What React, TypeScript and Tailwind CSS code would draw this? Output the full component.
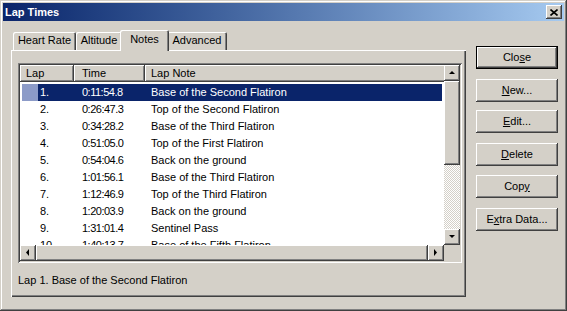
import React from 'react';

const raised =
  'shadow-[inset_-1px_-1px_#404040,inset_1px_1px_#ffffff,inset_-2px_-2px_#808080,inset_2px_2px_#d4d0c8]';
const sunken =
  'shadow-[inset_1px_1px_#808080,inset_-1px_-1px_#ffffff,inset_2px_2px_#404040,inset_-2px_-2px_#d4d0c8]';

const laps = [
  ['1.', '0:11:54.8', 'Base of the Second Flatiron'],
  ['2.', '0:26:47.3', 'Top of the Second Flatiron'],
  ['3.', '0:34:28.2', 'Base of the Third Flatiron'],
  ['4.', '0:51:05.0', 'Top of the First Flatiron'],
  ['5.', '0:54:04.6', 'Back on the ground'],
  ['6.', '1:01:56.1', 'Base of the Third Flatiron'],
  ['7.', '1:12:46.9', 'Top of the Third Flatiron'],
  ['8.', '1:20:03.9', 'Back on the ground'],
  ['9.', '1:31:01.4', 'Sentinel Pass'],
  ['10.', '1:40:13.7', 'Base of the Fifth Flatiron'],
];

const Arrow = ({ dir }: { dir: 'up' | 'down' | 'left' | 'right' }) => {
  const pts = {
    up: '1,5 4,2 7,5',
    down: '1,2 4,5 7,2',
    left: '5,0 2,3.5 5,7',
    right: '2,0 5,3.5 2,7',
  }[dir];
  return (
    <svg width="8" height="8" viewBox="0 0 8 8">
      <polygon points={pts} fill="#000" />
    </svg>
  );
};

const ScrollBtn = ({ dir }: { dir: 'up' | 'down' | 'left' | 'right' }) => (
  <div className={`w-[16px] h-[16px] shrink-0 bg-[#d4d0c8] flex items-center justify-center ${raised}`}>
    <Arrow dir={dir} />
  </div>
);

const Tab = ({ label, active, w }: { label: string; active?: boolean; w: string }) => (
  <div
    className={`${w} ${
      active ? 'h-[21px] -mx-[2px] -mb-px z-10 pt-[3px]' : 'h-[18px] pt-[2px]'
    } relative bg-[#d4d0c8] rounded-t-[2px] text-center shadow-[inset_1px_1px_#ffffff,inset_-1px_0_#404040,inset_-2px_0_#808080]`}
  >
    {label}
  </div>
);

const DlgButton = ({ children, def, mt }: { children: React.ReactNode; def?: boolean; mt: string }) => (
  <div
    className={`${mt} h-[23px] w-[82px] bg-[#d4d0c8] flex items-center justify-center ${
      def ? 'border border-black shadow-[inset_-1px_-1px_#404040,inset_1px_1px_#ffffff,inset_-2px_-2px_#808080]' : raised
    }`}
  >
    <span>{children}</span>
  </div>
);

export default function App() {
  return (
    <div className="w-[567px] h-[311px] bg-[#d4d0c8] p-[3px] text-[11px] leading-[13px] text-black font-['Liberation_Sans',Arial,sans-serif] shadow-[inset_-1px_-1px_#404040,inset_1px_1px_#d4d0c8,inset_-2px_-2px_#808080,inset_2px_2px_#ffffff] overflow-hidden">
      {/* Title bar */}
      <div className="h-[18px] flex items-center justify-between pl-[2px] pr-[2px] bg-gradient-to-r from-[#0a246a] to-[#a6caf0]">
        <span className="text-white font-bold">Lap Times</span>
        <div className={`w-[16px] h-[14px] bg-[#d4d0c8] flex items-center justify-center ${raised}`}>
          <svg width="8" height="7" viewBox="0 0 8 7">
            <path d="M0.5 0.5 L7.5 6.5 M7.5 0.5 L0.5 6.5" stroke="#000" strokeWidth="1.6" />
          </svg>
        </div>
      </div>

      <div className="flex pl-[8px] pt-[9px]">
        {/* Tab control */}
        <div className="w-[455px]">
          <div className="h-[20px] flex items-end pl-[2px]">
            <Tab label="Heart Rate" w="w-[63px]" />
            <Tab label="Altitude" w="w-[46px]" />
            <Tab label="Notes" w="w-[49px]" active />
            <Tab label="Advanced" w="w-[60px]" />
          </div>
          <div className="h-[247px] pl-[7px] pt-[13px] shadow-[inset_1px_1px_#ffffff,inset_-1px_-1px_#404040,inset_-2px_-2px_#808080]">
            <div className={`w-[444px] h-[200px] p-[2px] bg-white ${sunken}`}>
              <div className="flex h-[180px]">
                <div className="flex-1 overflow-hidden">
                  <div className="flex h-[17px] w-[440px] bg-[#d4d0c8]">
                    <div className={`w-[54px] pl-[6px] pt-[2px] ${raised}`}>Lap</div>
                    <div className={`w-[71px] pl-[8px] pt-[2px] ${raised}`}>Time</div>
                    <div className={`flex-1 pl-[6px] pt-[2px] ${raised}`}>Lap Note</div>
                  </div>
                  <div className="pt-[2px] pr-[2px] pl-[2px]">
                    {laps.map(([n, t, note], i) => {
                      const sel = i === 0;
                      return (
                        <div key={n} className="flex h-[17px] items-center whitespace-nowrap">
                          <div className={`w-[16px] h-full ${sel ? 'bg-[#8c9bc8]' : ''}`} />
                          <div className={`flex flex-1 h-full items-center ${sel ? 'bg-[#0a246a] text-white' : ''}`}>
                            <div className="w-[36px] pl-[2px]">{n}</div>
                            <div className="w-[71px] pl-[8px] tracking-[-0.5px]">{t}</div>
                            <div className="flex-1 pl-[6px]">{note}</div>
                          </div>
                        </div>
                      );
                    })}
                  </div>
                </div>
                <div className="w-[16px] flex flex-col bg-[#d4d0c8]">
                  <ScrollBtn dir="up" />
                  <div className={`h-[84px] ${raised}`} />
                  <div className="flex-1 bg-[image:repeating-conic-gradient(#d4d0c8_0_25%,#ffffff_0_50%)] bg-[length:2px_2px]" />
                  <ScrollBtn dir="down" />
                </div>
              </div>
              <div className="flex h-[16px]">
                <ScrollBtn dir="left" />
                <div className={`flex-1 bg-[#d4d0c8] ${raised}`} />
                <ScrollBtn dir="right" />
                <div className="w-[16px] bg-[#d4d0c8]" />
              </div>
            </div>
            <div className="mt-[11px]">Lap 1. Base of the Second Flatiron</div>
          </div>
        </div>

        {/* Buttons */}
        <div className="ml-[10px] pt-[16px] flex flex-col">
          <DlgButton def mt="mt-0">
            Clo<span className="underline">s</span>e
          </DlgButton>
          <DlgButton mt="mt-[10px]">
            <span className="underline">N</span>ew...
          </DlgButton>
          <DlgButton mt="mt-[8px]">
            <span className="underline">E</span>dit...
          </DlgButton>
          <DlgButton mt="mt-[10px]">
            <span className="underline">D</span>elete
          </DlgButton>
          <DlgButton mt="mt-[9px]">
            Cop<span className="underline">y</span>
          </DlgButton>
          <DlgButton mt="mt-[10px]">
            E<span className="underline">x</span>tra Data...
          </DlgButton>
        </div>
      </div>
    </div>
  );
}
